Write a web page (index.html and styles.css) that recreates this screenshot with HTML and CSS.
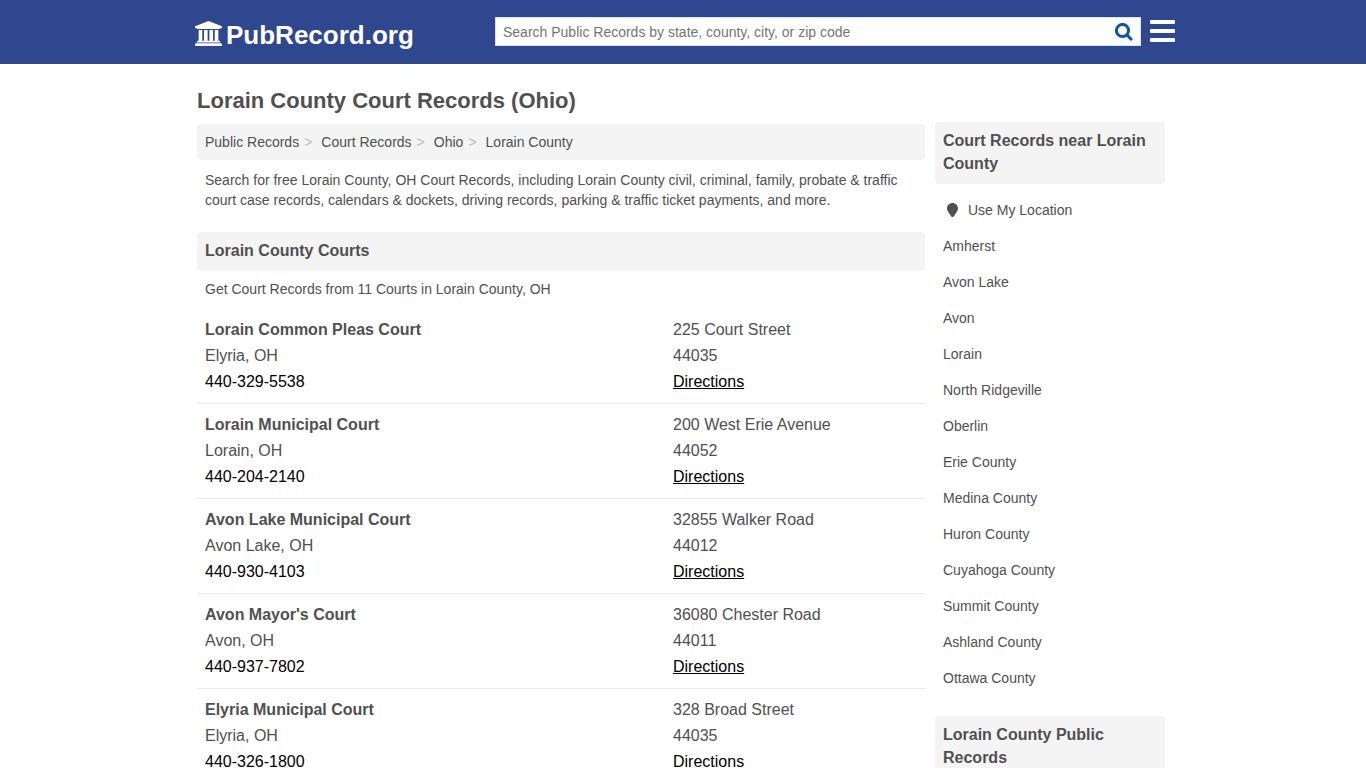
FILE: index.html
```html
<!DOCTYPE html>
<html lang="en">
<head>
    <meta charset="UTF-8">
    <meta name="viewport" content="width=device-width, initial-scale=1.0">
    <title>Lorain County Court Records (Ohio)</title>
    <link rel="stylesheet" href="styles.css">
</head>
<body>
    <header class="site-header">
        <div class="header-inner">
            <a class="logo" href="#">
                <svg class="logo-icon" viewBox="0 0 1920 1792" aria-hidden="true">
                    <path d="M960 0l960 384v128h-128q0 26-20 45t-49 19H197q-28 0-49-19t-20-45H0V384zM256 640h256v768h128V640h256v768h128V640h256v768h128V640h256v768h59q28 0 49 19t20 45v64H128v-64q0-26 20-45t49-19h59zM1851 1600q28 0 49 19t20 45v128H0v-128q0-26 20-45t49-19z"/>
                </svg>
                <span>PubRecord.org</span>
            </a>
            <form class="search" role="search">
                <input class="search-input" type="search" aria-label="Search Public Records" placeholder="Search Public Records by state, county, city, or zip code">
                <button class="search-button" type="button" aria-label="Search">
                    <svg viewBox="0 0 18 18" aria-hidden="true">
                        <circle cx="7.500" cy="7.500" r="6.100"/>
                        <path d="M12 12l5 5"/>
                    </svg>
                </button>
            </form>
            <button class="menu-button" type="button" aria-label="Menu">
                <span class="bar"></span>
                <span class="bar"></span>
                <span class="bar"></span>
            </button>
        </div>
    </header>

    <div class="page">
        <main class="content">
            <h1>Lorain County Court Records (Ohio)</h1>
            <nav aria-label="Breadcrumb">
                <ol class="breadcrumb">
                    <li><a href="#">Public Records</a></li>
                    <li><a href="#">Court Records</a></li>
                    <li><a href="#">Ohio</a></li>
                    <li><a href="#">Lorain County</a></li>
                </ol>
            </nav>
            <p class="intro">Search for free Lorain County, OH Court Records, including Lorain County civil, criminal, family, probate &amp; traffic court case records, calendars &amp; dockets, driving records, parking &amp; traffic ticket payments, and more.</p>

            <h2 class="section-title">Lorain County Courts</h2>
            <p class="section-text">Get Court Records from 11 Courts in Lorain County, OH</p>

            <div class="court">
                <div class="court-info">
                    <h3><a href="#">Lorain Common Pleas Court</a></h3>
                    <p>Elyria, OH</p>
                    <a class="phone" href="tel:440-329-5538">440-329-5538</a>
                </div>
                <div class="court-address">
                    <p>225 Court Street</p>
                    <p>44035</p>
                    <a class="directions" href="#">Directions</a>
                </div>
            </div>
            <div class="court">
                <div class="court-info">
                    <h3><a href="#">Lorain Municipal Court</a></h3>
                    <p>Lorain, OH</p>
                    <a class="phone" href="tel:440-204-2140">440-204-2140</a>
                </div>
                <div class="court-address">
                    <p>200 West Erie Avenue</p>
                    <p>44052</p>
                    <a class="directions" href="#">Directions</a>
                </div>
            </div>
            <div class="court">
                <div class="court-info">
                    <h3><a href="#">Avon Lake Municipal Court</a></h3>
                    <p>Avon Lake, OH</p>
                    <a class="phone" href="tel:440-930-4103">440-930-4103</a>
                </div>
                <div class="court-address">
                    <p>32855 Walker Road</p>
                    <p>44012</p>
                    <a class="directions" href="#">Directions</a>
                </div>
            </div>
            <div class="court">
                <div class="court-info">
                    <h3><a href="#">Avon Mayor's Court</a></h3>
                    <p>Avon, OH</p>
                    <a class="phone" href="tel:440-937-7802">440-937-7802</a>
                </div>
                <div class="court-address">
                    <p>36080 Chester Road</p>
                    <p>44011</p>
                    <a class="directions" href="#">Directions</a>
                </div>
            </div>
            <div class="court">
                <div class="court-info">
                    <h3><a href="#">Elyria Municipal Court</a></h3>
                    <p>Elyria, OH</p>
                    <a class="phone" href="tel:440-326-1800">440-326-1800</a>
                </div>
                <div class="court-address">
                    <p>328 Broad Street</p>
                    <p>44035</p>
                    <a class="directions" href="#">Directions</a>
                </div>
            </div>
        </main>

        <aside class="sidebar">
            <h2 class="section-title">Court Records near Lorain County</h2>
            <ul class="side-list">
                <li>
                    <a class="location" href="#">
                        <svg class="pin" viewBox="0 0 11 14" aria-hidden="true">
                            <path d="M5.500 0C2.400 0 0 2.300 0 5.300c0 1.700.8 2.900 1.600 4.200l2.600 4c.6.700 2 .7 2.600 0l2.600-4C10.200 8.200 11 7 11 5.300 11 2.300 8.600 0 5.500 0z"/>
                        </svg>
                        <span>Use My Location</span>
                    </a>
                </li>
                <li><a href="#">Amherst</a></li>
                <li><a href="#">Avon Lake</a></li>
                <li><a href="#">Avon</a></li>
                <li><a href="#">Lorain</a></li>
                <li><a href="#">North Ridgeville</a></li>
                <li><a href="#">Oberlin</a></li>
                <li><a href="#">Erie County</a></li>
                <li><a href="#">Medina County</a></li>
                <li><a href="#">Huron County</a></li>
                <li><a href="#">Cuyahoga County</a></li>
                <li><a href="#">Summit County</a></li>
                <li><a href="#">Ashland County</a></li>
                <li><a href="#">Ottawa County</a></li>
            </ul>
            <h2 class="section-title">Lorain County Public Records</h2>
        </aside>
    </div>
</body>
</html>
```

FILE: styles.css
```css
* {
    box-sizing: border-box;
}

body {
    margin: 0;
    font-family: Arial, "Liberation Sans", sans-serif;
    font-size: 14px;
    line-height: 20px;
    color: #505050;
    background-color: #fff;
}

h1, h2, h3, p, ul, ol {
    margin: 0;
    padding: 0;
}

ul, ol {
    list-style: none;
}

a {
    color: inherit;
    text-decoration: none;
}

button {
    padding: 0;
    border: 0;
    background: none;
    cursor: pointer;
}

/* Header */
.site-header {
    background-color: #2e478f;
}

.header-inner {
    display: flex;
    align-items: center;
    max-width: 984px;
    height: 64px;
    margin: 0 auto;
    padding: 0 0 2px 4px;
}

.logo {
    display: flex;
    align-items: flex-start;
    gap: 4px;
    flex: 0 0 300px;
    padding-top: 8px;
    font-size: 26px;
    line-height: 30px;
    font-weight: bold;
    color: #fff;
}

.logo-icon {
    width: 27px;
    height: 25px;
    margin-top: 1px;
    fill: #fff;
}

.search {
    display: flex;
    flex: 1;
    height: 29px;
    background-color: #fff;
    border: 1px solid #d5e3f5;
}

.search-input {
    flex: 1;
    min-width: 0;
    padding: 1px 7px 0;
    border: 0;
    outline: 0;
    background: none;
    font: inherit;
    color: #505050;
}

.search-input::placeholder {
    color: #757575;
}

.search-button {
    display: flex;
    align-items: center;
    justify-content: center;
    width: 32px;
}

.search-button svg {
    width: 18px;
    height: 18px;
    margin-top: 1px;
    fill: none;
    stroke: #0f57a3;
    stroke-width: 3;
}

.menu-button {
    display: flex;
    flex-direction: column;
    gap: 5px;
    width: 25px;
    margin-left: 9px;
}

.bar {
    width: 100%;
    height: 4px;
    border-radius: 1px;
    background-color: #fff;
}

/* Page columns */
.page {
    display: flex;
    align-items: flex-start;
    gap: 10px;
    max-width: 980px;
    margin: 0 auto;
    padding: 0 8px 0 4px;
}

.content {
    flex: 1;
    min-width: 0;
}

.sidebar {
    flex: 0 0 230px;
    margin-top: 58px;
}

h1 {
    padding: 23px 0 9px;
    font-size: 22px;
    line-height: 28px;
}

.breadcrumb {
    display: flex;
    padding: 8px;
    border-radius: 4px;
    background-color: #f4f4f4;
}

.breadcrumb li + li::before {
    content: ">";
    padding: 0 9px 0 5px;
    color: #bbb;
}

.intro {
    padding: 10px 8px 22px;
}

.section-title {
    padding: 7px 8px 9px;
    border-radius: 4px;
    background-color: #f4f4f4;
    font-size: 16px;
    line-height: 23px;
}

.section-text {
    padding: 8px 8px 10px;
}

/* Courts */
.court {
    display: flex;
    gap: 8px;
    padding: 8px;
    border-bottom: 1px solid #ebebeb;
    font-size: 16px;
    line-height: 26px;
}

.court-info {
    flex: 0 0 460px;
}

.court h3 {
    font-size: 16px;
}

.phone,
.directions {
    color: #000;
}

.directions {
    text-decoration: underline;
}

/* Sidebar list */
.side-list {
    padding: 8px 0 20px;
}

.side-list a {
    display: block;
    padding: 8px;
}

.side-list .location {
    display: flex;
    align-items: center;
    gap: 10px;
    padding-left: 12px;
}

.pin {
    width: 11px;
    height: 14px;
    fill: #505050;
}
```
